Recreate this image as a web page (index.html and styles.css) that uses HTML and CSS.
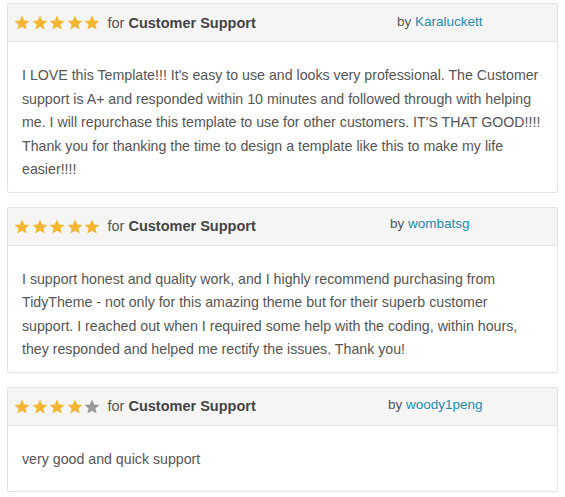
FILE: index.html
```html
<!DOCTYPE html>
<html lang="en">
<head>
  <meta charset="UTF-8">
  <title>Reviews</title>
  <link rel="stylesheet" href="styles.css">
</head>
<body>
  <svg width="0" height="0" class="defs">
    <defs>
      <path id="star" d="M8 0.6 L10.2 5.5 L15.4 5.9 L11.4 9.4 L12.6 14.6 L8 11.8 L3.4 14.6 L4.6 9.4 L0.6 5.9 L5.8 5.5 Z"/>
    </defs>
  </svg>

  <div class="review">
    <div class="review-head">
      <div class="rating">
        <svg class="star on" viewBox="0 0 16 15"><use href="#star"/></svg>
        <svg class="star on" viewBox="0 0 16 15"><use href="#star"/></svg>
        <svg class="star on" viewBox="0 0 16 15"><use href="#star"/></svg>
        <svg class="star on" viewBox="0 0 16 15"><use href="#star"/></svg>
        <svg class="star on" viewBox="0 0 16 15"><use href="#star"/></svg>
        <span class="for">for <b>Customer Support</b></span>
      </div>
      <div class="author author-a">by <a href="#">Karaluckett</a></div>
    </div>
    <div class="review-body">
      I LOVE this Template!!! It's easy to use and looks very professional. The Customer support is A+ and responded within 10 minutes and followed through with helping me. I will repurchase this template to use for other customers. IT'S THAT GOOD!!!! Thank you for thanking the time to design a template like this to make my life easier!!!!
    </div>
  </div>

  <div class="review">
    <div class="review-head">
      <div class="rating">
        <svg class="star on" viewBox="0 0 16 15"><use href="#star"/></svg>
        <svg class="star on" viewBox="0 0 16 15"><use href="#star"/></svg>
        <svg class="star on" viewBox="0 0 16 15"><use href="#star"/></svg>
        <svg class="star on" viewBox="0 0 16 15"><use href="#star"/></svg>
        <svg class="star on" viewBox="0 0 16 15"><use href="#star"/></svg>
        <span class="for">for <b>Customer Support</b></span>
      </div>
      <div class="author author-b">by <a href="#">wombatsg</a></div>
    </div>
    <div class="review-body">
      I support honest and quality work, and I highly recommend purchasing from TidyTheme - not only for this amazing theme but for their superb customer support. I reached out when I required some help with the coding, within hours, they responded and helped me rectify the issues. Thank you!
    </div>
  </div>

  <div class="review">
    <div class="review-head">
      <div class="rating">
        <svg class="star on" viewBox="0 0 16 15"><use href="#star"/></svg>
        <svg class="star on" viewBox="0 0 16 15"><use href="#star"/></svg>
        <svg class="star on" viewBox="0 0 16 15"><use href="#star"/></svg>
        <svg class="star on" viewBox="0 0 16 15"><use href="#star"/></svg>
        <svg class="star" viewBox="0 0 16 15"><use href="#star"/></svg>
        <span class="for">for <b>Customer Support</b></span>
      </div>
      <div class="author author-c">by <a href="#">woody1peng</a></div>
    </div>
    <div class="review-body">
      very good and quick support
    </div>
  </div>
</body>
</html>
```

FILE: styles.css
```css
body {
  margin: 0;
  padding: 3px 7px 0 7px;
  font-family: "Liberation Sans", Arial, sans-serif;
  color: #555;
  background: #fff;
}

.defs {
  position: absolute;
}

.review {
  width: 551px;
  border: 1px solid #e3e3e3;
  border-radius: 2px;
  margin-bottom: 14px;
  box-sizing: border-box;
}

.review-head {
  height: 38px;
  background: #f5f5f5;
  border-bottom: 1px solid #e3e3e3;
  display: flex;
  align-items: center;
  box-sizing: border-box;
  padding-left: 6px;
}

.rating {
  display: flex;
  align-items: center;
  width: 383px;
}

.star {
  width: 16px;
  height: 15px;
  margin-right: 1.5px;
  fill: #999;
}
.star.on { fill: #f4b630; }

.for {
  margin-left: 6px;
  font-size: 14.5px;
  color: #555;
}
.for b { color: #444; }

.author {
  font-size: 13.5px;
  color: #555;
  padding-bottom: 2px;
}
.author a {
  color: #1e8cb0;
  text-decoration: none;
}
.author-b { margin-left: -7px; padding-bottom: 6px; }
.author-c { margin-left: -9px; padding-bottom: 4px; }

.review-body {
  padding: 22px 15px 10px 14px;
  font-size: 14.2px;
  line-height: 23.5px;
  min-height: 65px;
  box-sizing: border-box;
}
```
